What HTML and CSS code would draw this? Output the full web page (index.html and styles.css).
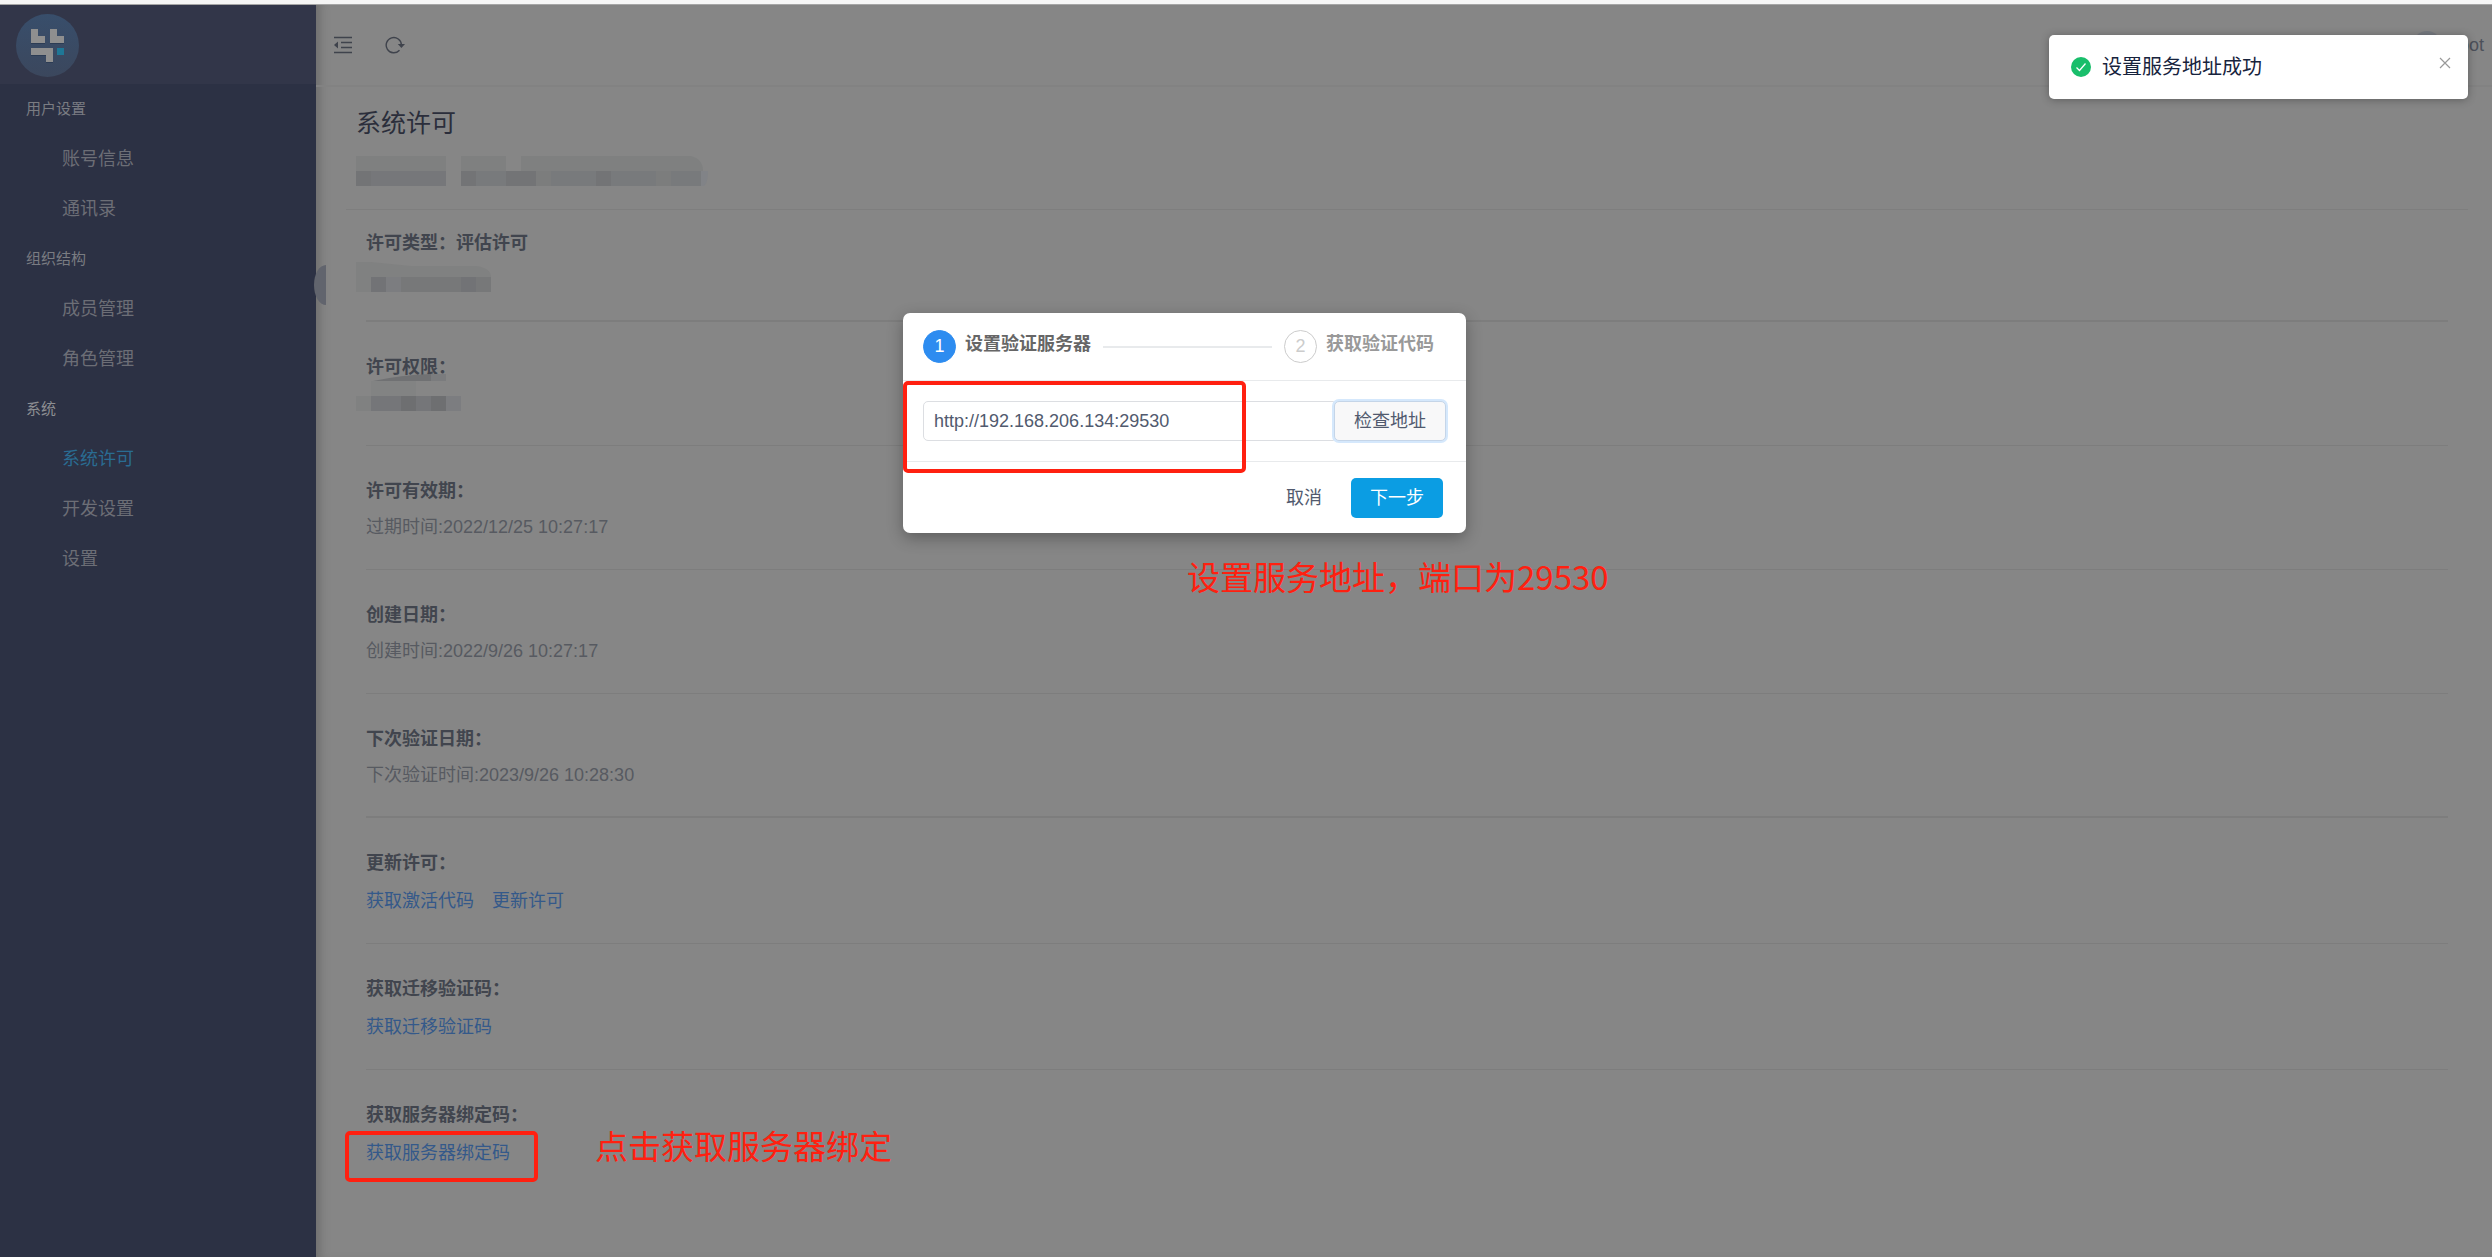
FILE: index.html
```
<!DOCTYPE html>
<html lang="zh-CN">
<head>
  <meta charset="UTF-8">
  <meta name="viewport" content="width=device-width, initial-scale=1.0">
  <title>系统许可</title>
  <link rel="stylesheet" href="styles.css">
</head>
<body>
  <div class="layout">
    <aside class="sidebar">
      <div class="logo-bar">
        <svg class="logo" viewBox="0 0 63 63">
          <defs>
            <linearGradient id="logo-bg" x1="0" y1="0" x2="0" y2="1">
              <stop offset="0" stop-color="#384e6b"/>
              <stop offset="1" stop-color="#3b475d"/>
            </linearGradient>
          </defs>
          <circle cx="31.5" cy="31.5" r="31.5" fill="url(#logo-bg)"/>
          <path d="M15 16h7v7h7v7H15zM34 16h7v7h7v7H34zM15 35h22v14h-7v-7H15z" fill="#2c3c54"/>
          <path d="M15 15h7v7h7v7H15zM34 15h7v7h7v7H34zM15 34h22v14h-7v-7H15z" fill="#8f8f8f"/>
          <path d="M41 34h7v7h-7z" fill="#1f7796"/>
        </svg>
      </div>
      <nav class="menu">
        <h3>用户设置</h3>
        <a href="#">账号信息</a>
        <a href="#">通讯录</a>
        <h3>组织结构</h3>
        <a href="#">成员管理</a>
        <a href="#">角色管理</a>
        <h3 class="current">系统</h3>
        <a href="#" class="active">系统许可</a>
        <a href="#">开发设置</a>
        <a href="#">设置</a>
      </nav>
    </aside>

    <div class="main">
      <button class="collapse" aria-label="收起"></button>
      <header class="topbar">
        <button class="icon-btn" aria-label="折叠菜单">
          <svg width="20" height="18" viewBox="0 0 20 18">
            <path d="M1 1.5h18M8 6.5h11M8 11.5h11M1 16.5h18" stroke="#3f434c" stroke-width="1.4" fill="none"/>
            <path d="M5 5.5v7L1 9z" fill="#3f434c"/>
          </svg>
        </button>
        <button class="icon-btn" aria-label="刷新">
          <svg width="20" height="18" viewBox="0 0 20 18">
            <path d="M14.5 14.2A7.6 7.6 0 1 1 16.4 9" stroke="#3f434c" stroke-width="1.4" fill="none"/>
            <path d="M12.8 8h7.2l-3.6 4z" fill="#3f434c"/>
          </svg>
        </button>
        <div class="user"><i class="avatar"></i><span>root</span></div>
      </header>

      <main class="content">
        <div class="page-head">
          <h1>系统许可</h1>
          <svg width="352" height="30" viewBox="0 0 352 30">
            <path d="M0 0h90v15H0zM105 0h45v15h-45zM165 0h170q12 3 12 15H165z" fill="#7f8080"/>
            <path d="M0 15h90v15H0z" fill="#76777a"/>
            <path d="M105 15h240v15H105z" fill="#787a7c"/>
            <path d="M0 15h15v15H0zM105 15h15v15h-15zM150 15h30v15h-30zM240 15h15v15h-15z" fill="#737476"/>
            <path d="M180 15h15v15h-15zM300 15h15v15h-15z" fill="#7c7d7d"/>
            <path d="M345 15h7q0 12-4 15h-3z" fill="#818387"/>
          </svg>
        </div>

        <section class="item item-first">
          <h2>许可类型：评估许可</h2>
          <svg class="mosaic mosaic-type" width="135" height="30" viewBox="0 0 135 30">
            <path d="M0 0h15l40 4h65q15 2 15 11H0z" fill="#808181"/>
            <path d="M0 15h15v15H0z" fill="#808181"/>
            <path d="M15 15h120v15H15z" fill="#777879"/>
            <path d="M15 15h15v15H15zM105 15h15v15h-15z" fill="#727376"/>
            <path d="M30 15h15v15H30z" fill="#7c7d80"/>
          </svg>
        </section>
        <section class="item">
          <h2>许可权限：</h2>
          <svg class="mosaic mosaic-rights" width="105" height="38" viewBox="0 0 105 38">
            <path d="M17 7Q45 1 75 0v7z" fill="#707173"/>
            <path d="M75 0h15v7H75z" fill="#7b7c7e"/>
            <path d="M15 7h45v15H15z" fill="#828383"/>
            <path d="M0 22h15v15H0z" fill="#808181"/>
            <path d="M15 22h75v15H15z" fill="#757679"/>
            <path d="M45 22h15v15H45zM75 22h15v15H75z" fill="#6e6f71"/>
            <path d="M90 22h15v15H90z" fill="#7c7d80"/>
          </svg>
        </section>
        <section class="item">
          <h2>许可有效期：</h2>
          <p>过期时间:2022/12/25 10:27:17</p>
        </section>
        <section class="item">
          <h2>创建日期：</h2>
          <p>创建时间:2022/9/26 10:27:17</p>
        </section>
        <section class="item item-thick">
          <h2>下次验证日期：</h2>
          <p>下次验证时间:2023/9/26 10:28:30</p>
        </section>
        <section class="item links">
          <h2>更新许可：</h2>
          <p><a href="#">获取激活代码</a><a href="#">更新许可</a></p>
        </section>
        <section class="item links">
          <h2>获取迁移验证码：</h2>
          <p><a href="#">获取迁移验证码</a></p>
        </section>
        <section class="item links">
          <h2>获取服务器绑定码：</h2>
          <p class="marked"><a href="#">获取服务器绑定码</a><span class="mark mark-link"></span><span class="note note-link">点击获取服务器绑定</span></p>
        </section>
      </main>
    </div>
  </div>

  <div class="modal" role="dialog" aria-label="设置验证服务器">
    <div class="steps">
      <span class="step-no on">1</span>
      <span class="step-title on">设置验证服务器</span>
      <span class="step-line"></span>
      <span class="step-no">2</span>
      <span class="step-title">获取验证代码</span>
    </div>
    <div class="address">
      <input type="text" aria-label="服务地址" value="http://192.168.206.134:29530">
      <button class="check">检查地址</button>
      <span class="mark mark-input"></span>
    </div>
    <div class="actions">
      <button class="cancel">取消</button>
      <button class="next">下一步</button>
    </div>
    <span class="note note-modal">设置服务地址，端口为29530</span>
  </div>

  <div class="notice" role="status">
    <svg width="20" height="20" viewBox="0 0 20 20">
      <circle cx="10" cy="10" r="10" fill="#19be6b"/>
      <path d="M5.5 10.5l3 3 6-7" stroke="#fff" stroke-width="1.3" fill="none"/>
    </svg>
    <span>设置服务地址成功</span>
    <button class="close" aria-label="关闭">
      <svg width="12" height="12" viewBox="0 0 12 12">
        <path d="M1 1l10 10M11 1L1 11" stroke="#999" stroke-width="1.2"/>
      </svg>
    </button>
  </div>
</body>
</html>
```

FILE: styles.css
```
* {
  box-sizing: border-box;
}

body {
  margin: 0;
  background: #868686;
  font-family: "Liberation Sans", "Noto Sans CJK SC", sans-serif;
  font-size: 18px;
  line-height: 24px;
  color: #41454e;
}

h1, h2, h3, p {
  margin: 0;
}

a {
  text-decoration: none;
}

svg {
  display: block;
}

button {
  padding: 0;
  border: none;
  background: none;
  font: inherit;
  color: inherit;
  cursor: pointer;
}

.layout {
  display: flex;
  min-height: 100vh;
  border-top: 4px solid #f5f5f5;
}

/* sidebar */

.sidebar {
  flex: none;
  width: 316px;
  background: #2c3144;
  border-top: 1px solid #a5a5a5;
}

.logo-bar {
  height: 79px;
  padding: 9px 16px;
  background: #323649;
}

.logo {
  width: 63px;
  height: 63px;
}

.menu {
  display: flex;
  flex-direction: column;
}

.menu h3 {
  padding-left: 26px;
  font-size: 15px;
  font-weight: normal;
  line-height: 50px;
  color: #7a7c82;
}

.menu h3.current {
  color: #8c8e92;
}

.menu a {
  padding-left: 62px;
  line-height: 50px;
  color: #6c6e76;
}

.menu a.active {
  color: #2a6c92;
}

/* main area */

.main {
  position: relative;
  flex: 1;
  border-top: 1px solid #a5a5a5;
  box-shadow: inset 10px 0 10px -6px #6e6e6e;
}

.collapse {
  position: absolute;
  left: -2px;
  top: 260px;
  width: 12px;
  height: 40px;
  border-radius: 12px 0 0 12px / 20px 0 0 20px;
  background: #61646d;
}

.topbar {
  display: flex;
  align-items: center;
  gap: 32px;
  height: 82px;
  padding: 0 8px 0 17px;
  border-bottom: 2px solid #828282;
}

.icon-btn {
  display: flex;
}

.user {
  display: flex;
  align-items: center;
  gap: 12px;
  margin-left: auto;
  color: #4c505a;
}

.avatar {
  width: 28px;
  height: 28px;
  border-radius: 50%;
  background: #767a80;
}

.content {
  padding: 0 24px 0 30px;
}

.page-head {
  height: 123px;
  padding: 18px 10px 0;
  border-bottom: 1px solid #7e7e7e;
}

h1 {
  margin-bottom: 15px;
  font-size: 25px;
  font-weight: normal;
  line-height: 36px;
  color: #2b2e3b;
}

.item {
  height: 124px;
  margin: 0 20px;
  padding-top: 33px;
  border-bottom: 1px solid #7d7d7d;
}

.item-first {
  height: 112px;
  padding-top: 21px;
}

.item-first,
.item-thick {
  border-bottom-width: 2px;
}

.item:last-child {
  border-bottom: none;
}

h2 {
  font-size: 18px;
  line-height: 24px;
}

.item p {
  margin-top: 12px;
  color: #575a61;
}

/* hidden values */

.mosaic {
  margin-left: -10px;
}

.mosaic-type {
  margin-top: 7px;
}

.mosaic-rights {
  margin-top: -5px;
}

.links {
  height: 126px;
}

.links p {
  display: flex;
  gap: 18px;
  padding-top: 2px;
}

.links a {
  color: #34598a;
}

/* modal */

.modal {
  position: absolute;
  left: 50%;
  top: 313px;
  width: 563px;
  margin-left: -343px;
  border-radius: 7px;
  background: #fff;
  box-shadow: 0 5px 16px rgba(0, 0, 0, 0.3);
}

.steps {
  display: flex;
  align-items: center;
  height: 68px;
  padding: 0 32px 0 20px;
  border-bottom: 1px solid #e8eaec;
}

.step-no {
  width: 33px;
  height: 33px;
  border: 1px solid #ccc;
  border-radius: 50%;
  line-height: 31px;
  text-align: center;
  color: #ccc;
}

.step-no.on {
  border-color: #2d8cf0;
  background: #2d8cf0;
  color: #fff;
}

.step-title {
  padding: 0 0 6px 9px;
  font-weight: bold;
  color: #999;
}

.step-title.on {
  color: #666;
}

.step-line {
  flex: 1;
  height: 2px;
  margin: 0 12px;
  background: #e8eaec;
}

.address {
  position: relative;
  display: flex;
  padding: 20px;
  border-bottom: 1px solid #e8eaec;
}

.address input {
  flex: 1;
  min-width: 0;
  height: 40px;
  padding: 0 10px;
  border: 1px solid #dcdee2;
  border-radius: 5px 0 0 5px;
  font: inherit;
  color: #515a6e;
}

.check {
  width: 112px;
  height: 40px;
  border: 1px solid #c5d5e8;
  border-radius: 5px;
  background: #f8f8f9;
  box-shadow: 0 0 0 2px #d5e8fc;
  color: #515a6e;
}

.actions {
  display: flex;
  justify-content: flex-end;
  padding: 16px 23px 15px;
  color: #515a6e;
}

.cancel {
  width: 66px;
  margin-right: 14px;
}

.next {
  width: 92px;
  height: 40px;
  border-radius: 5px;
  background: #0b9de3;
  color: #fff;
}

/* red marks */

.marked {
  position: relative;
}

.mark {
  position: absolute;
  border: 4px solid #ff2010;
  border-radius: 5px;
}

.mark-link {
  left: -21px;
  top: -8px;
  width: 193px;
  height: 51px;
}

.mark-input {
  left: 0;
  top: 0;
  width: 343px;
  height: 92px;
}

.note {
  position: absolute;
  font-family: "Noto Sans CJK SC", sans-serif;
  font-size: 33px;
  line-height: 40px;
  white-space: nowrap;
  color: #ff2010;
}

.note-link {
  left: 229px;
  top: -14px;
}

.note-modal {
  left: 284px;
  top: 243px;
}

/* notification */

.notice {
  position: absolute;
  right: 24px;
  top: 35px;
  display: flex;
  align-items: center;
  gap: 11px;
  width: 419px;
  height: 64px;
  padding: 0 22px;
  border-radius: 5px;
  background: #fff;
  box-shadow: 0 1px 8px rgba(0, 0, 0, 0.3);
  font-size: 20px;
  color: #17233d;
}

.close {
  display: flex;
  position: absolute;
  right: 17px;
  top: 22px;
}
```
